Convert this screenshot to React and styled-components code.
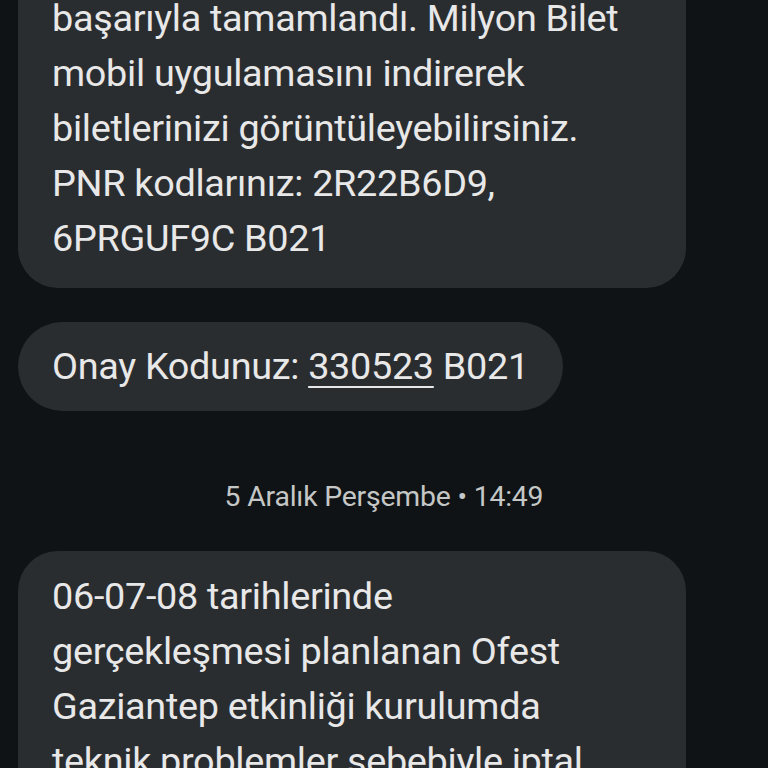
import React from "react";
import styled, { createGlobalStyle } from "styled-components";

const Global = createGlobalStyle`
  html, body { margin: 0; padding: 0; background: #101316; }
  body { font-family: Roboto, "Noto Sans", sans-serif; -webkit-font-smoothing: antialiased; }
`;

const Screen = styled.div`
  width: 768px;
  height: 768px;
  overflow: hidden;
  background: #101316;
`;

const Thread = styled.div`
  display: flex;
  flex-direction: column;
  align-items: flex-start;
  padding: 0 18px;
  margin-top: -9px;
`;

const Bubble = styled.div`
  box-sizing: border-box;
  max-width: 668px;
  width: ${p => (p.$full ? "668px" : "auto")};
  background: #2a2d30;
  color: #e8e8e8;
  font-size: 37.8px;
  line-height: 55px;
  letter-spacing: -0.3px;
  padding: ${p => p.$pad || "18px 34px"};
  border-radius: ${p => p.$radius || "40px"};
  margin-top: ${p => p.$mt || "0"};
  white-space: nowrap;
`;

const Code = styled.span`
  text-decoration: underline;
  text-decoration-thickness: 2px;
  text-underline-offset: 7px;
`;

const Stamp = styled.div`
  align-self: center;
  margin: 69px 0 37px;
  color: #c4c7c5;
  font-size: 28.4px;
  line-height: 34px;
  letter-spacing: -0.2px;
`;

export default function App() {
  return (
    <Screen>
      <Global />
      <Thread>
        <Bubble $full $pad="0 34px 22px" $radius="0 0 40px 40px">
          başarıyla tamamlandı. Milyon Bilet<br />
          mobil uygulamasını indirerek<br />
          biletlerinizi görüntüleyebilirsiniz.<br />
          PNR kodlarınız: 2R22B6D9,<br />
          6PRGUF9C B021
        </Bubble>
        <Bubble $pad="17px 34px" $radius="45px" $mt="34px">
          Onay Kodunuz: <Code>330523</Code> B021
        </Bubble>
        <Stamp>5 Aralık Perşembe • 14:49</Stamp>
        <Bubble $full $pad="18px 34px 0" $radius="40px 40px 0 0">
          06-07-08 tarihlerinde<br />
          gerçekleşmesi planlanan Ofest<br />
          Gaziantep etkinliği kurulumda<br />
          teknik problemler sebebiyle iptal
        </Bubble>
      </Thread>
    </Screen>
  );
}
